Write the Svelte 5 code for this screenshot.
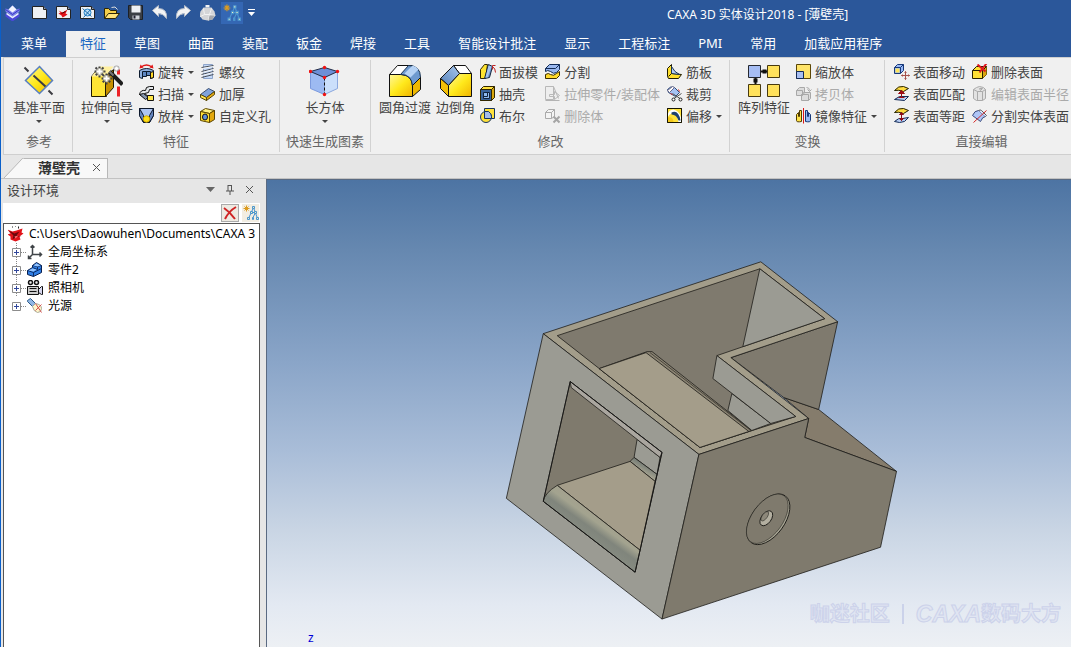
<script>
  const icons = {
    logo: '<path d="M1 4l3 1 4-4 4 4 3-1v3l-7 5-7-5z" fill="#7f84ee"/><path d="M4 5l4-4 4 4-4 3z" fill="#f2f4ff"/><path d="M1 9l3 1 4 3 4-3 3-1v3l-7 5-7-5z" fill="#4a47d8"/><path d="M2 8l6 4 6-4v2l-6 4-6-4z" fill="#e6eaff"/><path d="M1 5l7 5 7-5" stroke="#3431c0" fill="none"/>',
    blank: '<path d="M1 2h11l3 3v9H1z" fill="#eef0f3" stroke="#222"/><path d="M12 2v3h3" fill="#8d9bb5" stroke="#222"/>',
    newPart: '<path d="M1 2h11l3 3v9H1z" fill="#eef0f3" stroke="#222"/><path d="M12 2v3h3" fill="#8d9bb5" stroke="#222"/><path d="M3 6l4 2 5-3-2 4 2 1-3 2-2 1-1-2-3-2 2-1z" fill="#e21018"/><path d="M6 9l4-2" stroke="#500"/>',
    newDraw: '<path d="M1 2h11l3 3v9H1z" fill="#eef0f3" stroke="#222"/><path d="M12 2v3h3" fill="#8d9bb5" stroke="#222"/><circle cx="8" cy="8" r="3.500" fill="#bfe0f5" stroke="#2483c8"/><path d="M3 4l9 8M11 5l-7 8" stroke="#1b69a8"/>',
    folder: '<path d="M1 14V4h4l2 2h6v3" fill="#f3cf4b" stroke="#2b2508"/><path d="M1 14l4-5h11l-4 5z" fill="#ffe479" stroke="#2b2508"/><path d="M8 3q4-2 6 2" stroke="#ddd" fill="none"/>',
    save: '<path d="M1 1h14v14H3l-2-2z" fill="#3b3f46" stroke="#1c2027"/><path d="M4 1h9v7H4z" fill="#eef0f4"/><path d="M5 11h7v4H5z" fill="#cfd3da"/><path d="M6 11h2v3H6z" fill="#223"/>',
    undo: '<path d="M1 6l6-5v3q9 0 8 10-3-5-8-5v3z" fill="#f4f4f4" stroke="#b5bdca"/>',
    redo: '<path d="M15 6L9 1v3q-9 0-8 10 3-5 8-5v3z" fill="#f4f4f4" stroke="#b5bdca"/>',
    sphere: '<path d="M6 0h4v3H6z" fill="#f3f3f3"/><path d="M4 3h8l3 4 1 4-3 4-5 1-5-1-3-4 1-4z" fill="#d4d5d7"/><path d="M4 4l1 6-4 2M12 4l-2 6 5 1M5 10h5l-1 6" stroke="#f2f2f2" fill="none"/><path d="M10 11l5 0-2 4-4 1z" fill="#a7a9ad"/>',
    structure: '<path d="M4 1v6M1 4h6M2 2l4 4M6 2L2 6" stroke="#dc9c20"/><path d="M11 3L6 14M11 3l4 11M9 8h4M13 8l-3 6" stroke="#4a94cf" fill="none"/><path d="M10 2h2v2h-2zM8 7h2v2H8zM12 7h2v2h-2zM5 13h2v2H5zM10 13h1v2h-1zM14 13h2v2h-2z" fill="#f3f3c4" stroke="#4a94cf"/>',
    revolve: '<path d="M1 7q7-4 14 0v7l-3 1v-5q-4-2-8 0v5l-3-1z" fill="#8fb0e0" stroke="#0d1b2e"/><path d="M4 8h4v5H4zM8 8h4v4H8z" fill="#5f87c2" stroke="#0d1b2e"/><path d="M12 9l3-1v6l-3 1z" fill="#ffd927" stroke="#111"/><path d="M2 4q6-5 12 0" stroke="#e01818" fill="none" stroke-width="1.500"/><path d="M1 5l1-4 3 3zM15 5l-1-4-3 3z" fill="#e01818"/>',
    sweep: '<path d="M1 9q1-5 6-4l1-3 3-1h4v3h-4l-1 3-4 1 4 3-2 2z" fill="#e3e7ea" stroke="#111"/><path d="M1 9l6 5 3-2-5-4z" fill="#8596ae" stroke="#111"/><path d="M9 10h6v5H9z" fill="#ffe646" stroke="#111"/>',
    loft: '<path d="M1 1h14v7l-4 7H5L1 8z" fill="#adc5f3" stroke="#0c172b"/><path d="M1 1l4 7v7L1 8zM15 1l-4 7v7l4-7z" fill="#6384bf" stroke="#0c172b"/><circle cx="8" cy="11.500" r="3.200" fill="#ffe019" stroke="#d0a800"/>',
    thread: '<path d="M4 1h9v14H4z" fill="#c3d8f7" stroke="#8fa6cc"/><path d="M2 4l12-2M2 8l12-3M2 11l12-3M2 14l12-3" stroke="#4c5058"/><path d="M3 5l11-2M3 9l11-3M3 12l11-3" stroke="#f4f4f4"/>',
    thicken: '<path d="M1 9l8-6 6 3-8 6z" fill="#7fa2dc" stroke="#3a4d70"/><path d="M1 9v3l6 3v-3z" fill="#ffe450" stroke="#57470b"/><path d="M7 12l8-6v3l-8 6z" fill="#e5ac16" stroke="#57470b"/>',
    hole: '<path d="M1 4l5-3 9 2-5 3z" fill="#fff283" stroke="#5c4600"/><path d="M1 4l9 2v9l-9-2z" fill="#ffdf35" stroke="#5c4600"/><path d="M10 6l5-3v9l-5 3z" fill="#e3a80d" stroke="#5c4600"/><ellipse cx="5.500" cy="9.500" rx="2.500" ry="3" fill="#6293da" stroke="#111"/>',
    draft: '<path d="M1 6l4-5h3L6 15H1z" fill="#ffe431" stroke="#302700"/><path d="M5 15L9 1l4 2-3 11z" fill="#6d96ce" stroke="#14243c"/><path d="M9 2l3 1-4 11H6z" fill="#a8c5ed"/><path d="M16 9q0-4-3-6m0 3V2h3" fill="none" stroke="#b22"/>',
    shell: '<path d="M1 4l3-3h11v11l-3 3H1z" fill="#ffe23e" stroke="#302600"/><path d="M12 4l3-3v11l-3 3z" fill="#d7a50c" stroke="#302600"/><path d="M1 4h11v11H1z" fill="#38639a" stroke="#302600"/><path d="M4 7h6v6H4z" fill="#8dbbf1" stroke="#10233d"/><path d="M4 11h4V7" fill="none" stroke="#10233d"/>',
    bool: '<path d="M5 1h10v10H5z" fill="#ffe13a" stroke="#15335e"/><circle cx="6.500" cy="9.500" r="5.500" fill="#ffe13a" stroke="#15335e"/><path d="M5 4h4q3 2 3 5v2H5z" fill="#a6bde9" stroke="#15335e"/>',
    split: '<path d="M1 5l4-4h10v5l-3 3q-3 2-6-1-3-2-5 0z" fill="#9ab8ef" stroke="#112b56"/><path d="M1 5h10l4-4" fill="none" stroke="#112b56"/><path d="M1 11q3-2 5 0 3 2 6-1l3-2v4l-3 3H1z" fill="#ffda2b" stroke="#3b2d00"/>',
    pull: '<path d="M1 1h8v13H1zM9 1l5 12M5 9h5V6l5 4-5 4v-3H5z" fill="#eee" stroke="#b8b8b8"/><path d="M1 15h14" stroke="#b3b3b3"/>',
    delBody: '<path d="M1 5l3-3h6v7l-3 2H1zM1 5h6v6M7 5l3-3" fill="#f4f4f4" stroke="#aaa"/><path d="M9 9l6 6M15 9l-6 6" stroke="#a5a5a5" stroke-width="2"/>',
    rib: '<path d="M1 5l4-4v9l10 1-3 4H2l-1-2z" fill="#ffdf2c" stroke="#1d1a00"/><path d="M5 3v7l8 1Q8 9 5 3z" fill="#b5cff5" stroke="#1b3350"/><path d="M2 13l3-3" stroke="#1d1a00"/>',
    trim: '<path d="M1 4q3-4 7-2l5 5-4 4-7-4z" fill="#a6c2f3" stroke="#334c78"/><path d="M1 5l5-4 2 1-5 5z" fill="#fff" stroke="#668"/><path d="M6 8l9 6M15 8l-9 6" stroke="#555"/><circle cx="7" cy="14" r="1.500" fill="#fff" stroke="#222"/><circle cx="14" cy="14" r="1.500" fill="#fff" stroke="#222"/><path d="M4 8l2 1M12 4l1 2" stroke="#d22"/>',
    offset: '<path d="M1 1h14v14H1z" fill="#ffe33b" stroke="#171500"/><path d="M1 8Q2 2 7 2q8 2 8 13h-3Q11 7 6 6q-3 0-5 4z" fill="#fff"/><path d="M5 5q7-3 9 8h-2Q10 7 5 7z" fill="#1f416e"/><path d="M1 10q6-1 6 5H1z" fill="#f4c81c"/><path d="M1 1h14v14H1z" fill="none" stroke="#171500"/>',
    scale: '<path d="M1 1h14v14H1z" fill="#ffe469" stroke="#5c4707"/><path d="M1 8h7v7H1z" fill="#a9bff1" stroke="#132a56"/>',
    copy: '<path d="M1 5l3-3h5v5l-2 3H1zM6 9l2-2h7v6l-2 2H6z" fill="#ddd" stroke="#a8a8a8"/><path d="M1 5h6v5M6 9h7v6M11 2q3 0 3 3M12 4l2 2 2-2" fill="none" stroke="#a8a8a8"/>',
    mirror: '<path d="M6 3v11q-5 1-5-1V7l2-2v4h1V3z" fill="#ffe249" stroke="#4f3b00"/><path d="M10 3v11q5 1 5-1V7l-2-2v4h-1V3z" fill="#98baf2" stroke="#17397b"/><path d="M8 0v16" stroke="#dc1717"/>',
    faceMove: '<path d="M1 4l3-3h6v6l-3 3H1z" fill="#98b9f7" stroke="#173879"/><path d="M1 4h6v6M7 4l3-3" fill="none" stroke="#173879"/><path d="M2 5h4v4H2z" fill="#ffe55b"/><path d="M12 8v8M8 12h8M11 9l1-1 1 1M11 15l1 1 1-1M9 11l-1 1 1 1M15 11l1 1-1 1" fill="none" stroke="#a5524c"/>',
    faceMatch: '<path d="M1 5q4-5 9-4l5 2-5 3q-5-2-9-1z" fill="#ffdc40" stroke="#242000"/><path d="M1 14l5-3h9l-4 4z" fill="#b7cdf4" stroke="#142b56"/><path d="M8 5v7M5 8l3-3 3 3z" fill="#9c0d16" stroke="#9c0d16"/><path d="M5 12h6" stroke="#9c0d16"/>',
    faceOffset: '<path d="M1 5q4-5 9-4l5 2-5 3q-5-2-9-1z" fill="#ffdc40" stroke="#242000"/><path d="M1 14q4-4 8-3l6-1-4 4q-5 2-10 0z" fill="#b7cdf4" stroke="#142b56"/><path d="M8 5v8M6 7l2-2 2 2zM6 11l2 2 2-2z" fill="#8c0d16" stroke="#8c0d16"/>',
    delFace: '<path d="M1 7l4-4h10v8l-4 4H1z" fill="#ffe035" stroke="#282100"/><path d="M11 7l4-4v8l-4 4z" fill="#d9a510"/><path d="M1 7h10v8M11 7l4-4" fill="none" stroke="#282100"/><path d="M6 1l8 7M15 0L8 9" stroke="#df1820" stroke-width="2"/>',
    editRadius: '<path d="M2 4l3-2 3-1 4 1 2 2v9l-3 2H5l-3-2z" fill="#e2e2e2" stroke="#aaa"/><path d="M2 4l4 2h5l3-2M6 6v9M11 6v9M8 3h3l-2 2z" fill="none" stroke="#aaa"/>',
    splitFace: '<path d="M1 8q2-5 6-5l7 6q-3 0-5 5z" fill="#afc6f7" stroke="#3a4b7d"/><path d="M7 3q2-1 3 0l5 5-1 1" fill="#dee8ff" stroke="#555"/><path d="M2 15L15 3" stroke="#d62626"/>',
    datum: '<path d="M17 2l13 14-13 13L3 16z" fill="url(#gold)" stroke="#587fc0" stroke-width="1.500"/><path d="M2 3l4 4M11 11l12 11M26 26l4 4" stroke="#3c3c42" stroke-width="2"/>',
    wizard: '<path d="M1 12l4-5h10v24l1 1H1z" fill="#ffe535" stroke="#201900"/><path d="M15 12l8-7v18l-8 9z" fill="#c79000" stroke="#201900"/><path d="M1 12l8-10h14l-8 10z" fill="#fff0a0"/><path d="M28 5v27" stroke="#ec2227" stroke-width="3" stroke-dasharray="5 12 10"/><g fill="#999" opacity=".8"><circle cx="9" cy="7" r="4"/><circle cx="16" cy="14" r="4"/><circle cx="26" cy="4" r="3"/></g><g stroke="#444" stroke-width="2" stroke-dasharray="2 7"><path d="M9 2v11M4 7h11M5 3l8 8M13 3l-8 8M16 9v11M11 14h11M12 10l8 8M20 10l-8 8"/></g><path d="M9 4v6M6 7h6M16 11v6M13 14h6M26 2v4M24 4h4" stroke="#fff" stroke-width="2"/><path d="M19 7l13 13" stroke="#1d1d1d" stroke-width="4"/><path d="M19 7l4 4" stroke="#777" stroke-width="2"/>',
    box: '<path d="M2 7l14-4 13 4-13 6z" fill="#6c8fd8"/><path d="M2 7l14 6v17L2 24z" fill="#9dbaf2" stroke="#7c9ade"/><path d="M16 13l13-6v17l-13 6z" fill="#cbdffb" stroke="#8ca8de"/><path d="M16 13v17" stroke="#111" stroke-dasharray="3 2"/><path d="M2 7l14-4 13 4-13 6z" fill="none" stroke="#222b45"/><g fill="#f01212"><circle cx="2" cy="7" r="1.700"/><circle cx="16" cy="3" r="1.700"/><circle cx="29" cy="7" r="1.700"/><circle cx="16" cy="13" r="1.700"/><circle cx="16" cy="30" r="1.700"/></g>',
    fillet: '<path d="M1 10L9 1h15l-8 9z" fill="#fff" stroke="#111"/><path d="M1 10h12q11 1 11 12v10H1z" fill="url(#gold)" stroke="#111"/><path d="M12 10l8-9q12 0 12 12l-8 8Q23 10 12 10z" fill="#6f9acf" stroke="#19324f"/><path d="M16 9l8-8q4 1 6 4l-8 8z" fill="#b6d2f4"/><path d="M24 21l8-8v12l-8 7z" fill="#eeb800" stroke="#111"/>',
    chamfer: '<path d="M14 1h12l6 8H20z" fill="#fff" stroke="#111"/><path d="M1 14L14 1l6 8L9 21z" fill="url(#steel)" stroke="#111"/><path d="M1 14l8 7v11l-8-8z" fill="#f3c008" stroke="#111"/><path d="M9 21L20 9h12v23H9z" fill="url(#gold)" stroke="#111"/>',
    pattern: '<path d="M13 7h7M8 13v7" stroke="#101010" stroke-width="2"/><path d="M15 5h4v4h-4zM6 14h4v4H6z" fill="#101010"/><path d="M1 1h12v12H1z" fill="#a6bdf3" stroke="#25282f"/><path d="M20 1h12v12H20zM1 20h12v12H1zM20 20h12v12H20z" fill="#ffe15b" stroke="#47390f"/>',
    scene: '<path d="M0 4l5 2 4-1 6-2-1 4 2 1-4 3 1 3-5 2-5-2 0-3-3-2 3-1z" fill="#e11219"/><path d="M1 5l6 3 5-2-3 4 5 1-5 0-4 3 1-4z" fill="#69080c"/><path d="M5 1v1M11 1v2M8 0v1" stroke="#222"/><path d="M7 11l4-1-3 3z" fill="#ff7072"/>',
    axes: '<path d="M6 11V2M6 11h9M6 11l-4 4M4 4l2-2 2 2M13 9l2 2-2 2M2 12v3h3" fill="none" stroke="#404448" stroke-width="1.500"/>',
    part: '<path d="M1 9l5-3V4l4-3 5 3v7l-8 4-6-2z" fill="#2f7fe6" stroke="#091e4c"/><path d="M1 9l6 2v4M7 11l8-4M6 6l5 2V5l4-1M6 4l5 1" fill="none" stroke="#092b66"/><path d="M2 9l4-2 4 1-3 2zM7 4l3-2 4 2-3 1z" fill="#94c5ff"/>',
    camera: '<circle cx="4" cy="3" r="2" fill="#eee" stroke="#111" stroke-width="1.500"/><circle cx="10" cy="3" r="2" fill="#eee" stroke="#111" stroke-width="1.500"/><path d="M1 7h11v8H1z" fill="#ccc" stroke="#111"/><path d="M12 10l3-3h1v8h-1l-3-2z" fill="#d7d7ef" stroke="#111"/><path d="M3 9h7M3 12h7" stroke="#111"/>',
    light: '<path d="M1 3l3-2 5 5-3 3-5-5z" fill="#8fb6e4" stroke="#2f5a86"/><path d="M6 9l3-3q6 1 6 5 0 4-4 4-4-1-5-6z" fill="#fff5c8" stroke="#aa9"/><path d="M9 6l6 9M9 13l6-6" stroke="#d55252"/>'
  };

  const quick = [
    ['logo', 'CAXA'], ['blank', '新建'], ['newPart', '新建设计'], ['newDraw', '新建图纸'], ['folder', '打开'],
    ['save', '保存'], ['undo', '撤销'], ['redo', '重做'], ['sphere', '渲染']
  ];
  const tabs = ['特征', '草图', '曲面', '装配', '钣金', '焊接', '工具', '智能设计批注', '显示', '工程标注', 'PMI', '常用', '加载应用程序'];

  // Small commands: [icon, label, has drop-down, disabled]
  const groups = [
    { name: '参考', large: [['datum', '基准平面', true]], cols: [] },
    {
      name: '特征', large: [['wizard', '拉伸向导', true]],
      cols: [
        [['revolve', '旋转', true], ['sweep', '扫描', true], ['loft', '放样', true]],
        [['thread', '螺纹'], ['thicken', '加厚'], ['hole', '自定义孔']]
      ]
    },
    { name: '快速生成图素', large: [['box', '长方体', true]], cols: [] },
    {
      name: '修改', large: [['fillet', '圆角过渡'], ['chamfer', '边倒角']],
      cols: [
        [['draft', '面拔模'], ['shell', '抽壳'], ['bool', '布尔']],
        [['split', '分割'], ['pull', '拉伸零件/装配体', false, true], ['delBody', '删除体', false, true]],
        [['rib', '筋板'], ['trim', '裁剪'], ['offset', '偏移', true]]
      ]
    },
    {
      name: '变换', large: [['pattern', '阵列特征']],
      cols: [[['scale', '缩放体'], ['copy', '拷贝体', false, true], ['mirror', '镜像特征', true]]]
    },
    {
      name: '直接编辑', large: [],
      cols: [
        [['faceMove', '表面移动'], ['faceMatch', '表面匹配'], ['faceOffset', '表面等距']],
        [['delFace', '删除表面'], ['editRadius', '编辑表面半径', false, true], ['splitFace', '分割实体表面']]
      ]
    }
  ];
  const nodes = [['axes', '全局坐标系'], ['part', '零件2'], ['camera', '照相机'], ['light', '光源']];

  let active = $state('特征');
  let filter = $state('');
</script>

{#snippet icon(name, size = 16)}
  <svg class="icon" width={size} height={size} viewBox="0.5 0.5 {size} {size}" aria-hidden="true">{@html icons[name]}</svg>
{/snippet}

{#snippet arrow()}
  <svg class="arrow" width="6" height="3" viewBox="0 0 6 3" aria-hidden="true"><path d="M0 0h6L3 3z" fill="#444" /></svg>
{/snippet}

<div class="app">
  <svg width="0" height="0" aria-hidden="true">
    <linearGradient id="gold" x1="0" y1="0" x2="1" y2="1">
      <stop offset="0" stop-color="#fff79a" /><stop offset=".5" stop-color="#ffe91c" /><stop offset="1" stop-color="#f0b400" />
    </linearGradient>
    <linearGradient id="steel" x1="0" y1="1" x2="1" y2="0">
      <stop offset="0" stop-color="#5580b8" /><stop offset="1" stop-color="#a9c8ee" />
    </linearGradient>
  </svg>
  <header>
    <div class="titlebar">
      <div class="quick">
        {#each quick as [name, label]}
          <button aria-label={label}>{@render icon(name)}</button>
        {/each}
        <button class="lit" aria-label="设计树">{@render icon('structure')}</button>
        <button class="more" aria-label="自定义">
          <svg width="7" height="7" viewBox="0 0 7 7"><path d="M0 0h7v1H0zM0 3h7L3.500 7z" fill="#fff" /></svg>
        </button>
      </div>
      <h1>CAXA 3D 实体设计2018 - [薄壁壳]</h1>
    </div>
    <nav>
      <button class="menu">菜单</button>
      {#each tabs as tab}
        <button class:active={active === tab} onclick={() => (active = tab)}>{tab}</button>
      {/each}
    </nav>
  </header>

  <div class="ribbon">
    {#each groups as group}
      <section class="group">
        <div class="commands">
          {#each group.large as [name, label, drop]}
            <button class="large">
              {@render icon(name, 32)}
              <span>{label}</span>
              {#if drop}{@render arrow()}{/if}
            </button>
          {/each}
          {#each group.cols as col}
            <div class="col">
              {#each col as [name, label, drop, off]}
                <button class="small" disabled={off}>
                  {@render icon(name)}
                  <span>{label}</span>
                  {#if drop}{@render arrow()}{/if}
                </button>
              {/each}
            </div>
          {/each}
        </div>
        <h2>{group.name}</h2>
      </section>
    {/each}
  </div>

  <div class="docs">
    <svg class="slant" width="20" height="20" viewBox="0 0 20 20" aria-hidden="true">
      <path d="M0 20L17 2l3-2v20z" fill="#f8f8f8" /><path d="M0 20L17 2q1-2 3-2" fill="none" stroke="#b8b8b8" />
    </svg>
    <div class="doc">
      <span>薄壁壳</span>
      <button aria-label="关闭文档"><svg width="9" height="9" viewBox="0 0 9 9"><path d="M1 1l7 7M8 1L1 8" stroke="#555" /></svg></button>
    </div>
  </div>

  <main>
    <aside>
      <div class="panel-head">
        <h2>设计环境</h2>
        <button aria-label="选项"><svg width="9" height="5" viewBox="0 0 9 5"><path d="M0 0h9L4.500 5z" fill="#666" /></svg></button>
        <button aria-label="固定"><svg width="8" height="10" viewBox="0 0 8 10"><path d="M2 0v6M5.500 0v6M2 .5h4M0 6h8M4 6v4" stroke="#555" fill="none" /></svg></button>
        <button aria-label="关闭"><svg width="9" height="9" viewBox="0 0 9 9"><path d="M1 1l7 7M8 1L1 8" stroke="#555" /></svg></button>
      </div>
      <div class="search">
        <input type="text" aria-label="搜索设计树" bind:value={filter} />
        <button class="clear" aria-label="清除" onclick={() => (filter = '')}>
          <svg width="14" height="14" viewBox="0 0 14 14"><path d="M1 2q6 4 11 11M13 1Q6 5 2 13" fill="none" stroke="#cf2525" stroke-width="2" /></svg>
        </button>
        <button class="pick" aria-label="设计树">{@render icon('structure')}</button>
      </div>
      <div class="tree">
        <div class="root">{@render icon('scene')}<span>C:\Users\Daowuhen\Documents\CAXA 3</span></div>
        <ul>
          {#each nodes as [name, label]}
            <li>
              <button class="expand" aria-label="展开"><svg width="9" height="9" viewBox="0 0 9 9"><path d="M.5.5h8v8h-8z" fill="#fff" stroke="#8c8c8c" /><path d="M2 4.500h5M4.500 2v5" stroke="#31479b" /></svg></button>
              <i></i>
              {@render icon(name)}
              <span>{label}</span>
            </li>
          {/each}
        </ul>
      </div>
    </aside>

    <div class="view">
      <svg class="model" viewBox="267 179 804 468" role="img" aria-label="薄壁壳">
        <defs>
          <linearGradient id="fillet" gradientUnits="userSpaceOnUse" x1="600" y1="518" x2="587" y2="536">
            <stop offset="0" stop-color="#a4a28f" /><stop offset=".25" stop-color="#a3a38f" />
            <stop offset=".6" stop-color="#80857c" /><stop offset="1" stop-color="#858a80" />
          </linearGradient>
          <linearGradient id="back" gradientUnits="userSpaceOnUse" x1="646" y1="465" x2="642" y2="472">
            <stop offset="0" stop-color="#777d76" /><stop offset="1" stop-color="#a5a390" />
          </linearGradient>
        </defs>
        <g stroke="#1e1d19" stroke-width=".8" stroke-linejoin="round">
          <path d="M784 397L819 409 897 471 805 437 809 418z" fill="#857c6c" />
          <path d="M731 357L838 321 819 409 784 397z" fill="#7f7a6e" />
          <path d="M543 333L761 261 838 321 731 357 809 418 699 454z" fill="#a39d8a" />
          <path d="M557 335L760 268 825 318 717 355 796 416 700 447z" fill="#7f7a6e" />
          <path d="M760 268L825 318 743 346z" fill="#9b9b93" />
          <path d="M599 368L647 351 652 351 752 430 700 447z" fill="#8b8473" />
          <path d="M599 368L646 352 749 431 700 447z" fill="#a49d8a" />
          <path d="M650 352L751 430" fill="none" stroke-width=".6" />
          <path d="M732 393L728 410 752 430 771 423z" fill="#9b9b93" />
          <path d="M717 355L796 416 771 423 713 378z" fill="#9b9b93" />
          <path d="M543 333L699 454 662 619 506 498z" fill="#9b9b93" />
          <path d="M699 454L809 418 805 437 897 471 881 547 662 619z" fill="#7f7a6d" />
          <path d="M570 381L662 452 635 572 543 501z" fill="#7f7a6d" />
          <path d="M637 439L660 457 657 474 634 457z" fill="#9b9b93" />
          <path d="M634 457L657 474 655 481 630 461z" fill="url(#back)" />
          <path d="M630 461L655 481 640 550 557 485z" fill="#a49d8a" />
          <path d="M557 485L640 550 635 572 543 501Q544 493 557 485z" fill="url(#fillet)" />
          <path d="M570 381L662 452 660 457 571 387z" fill="#aaa69f" />
          <path d="M570 381L662 452 635 572 543 501z" fill="none" stroke="#111" />
        </g>
        <g fill="#7f7a6d" stroke="#1e1d19" stroke-width=".9">
          <ellipse cx="768.500" cy="519" rx="16.500" ry="29" transform="rotate(36 768.500 519)" fill="#a7a493" />
          <ellipse cx="767.500" cy="518.500" rx="15.500" ry="28.500" transform="rotate(36 767.500 518.500)" stroke-width=".5" />
          <ellipse cx="766.500" cy="518" rx="5" ry="8.500" transform="rotate(36 766.500 518)" fill="#b3afa0" />
          <ellipse cx="765" cy="516" rx="2.500" ry="5.500" transform="rotate(36 765 516)" fill="#8d887a" stroke-width=".5" />
        </g>
      </svg>
      <span class="axis">z</span>
      <p class="mark">咖迷社区 <b></b> <em>CAXA</em>数码大方</p>
    </div>
  </main>
</div>

<style>
  :global(body) { margin: 0; }
  .app {
    display: flex; flex-direction: column; box-sizing: border-box; height: 100vh; overflow: hidden;
    border-left: 1px solid #0a5fc9; background: #e6e6e6; color: #444;
    font: 13px/20px "Noto Sans", "Noto Sans CJK SC", sans-serif;
  }
  button { display: flex; align-items: center; margin: 0; padding: 0; border: 0; background: none; color: inherit; font: inherit; white-space: nowrap; }
  h1, h2, p, ul { margin: 0; padding: 0; font: inherit; list-style: none; }
  svg { display: block; flex: none; }

  header { flex: none; background: #2b579a; color: #fff; }
  .titlebar { display: flex; align-items: center; height: 31px; }
  .quick { display: flex; align-items: center; gap: 8px; height: 24px; padding-left: 4px; margin-bottom: 6px; }
  .quick button:first-child { margin-right: 3px; }
  .quick .lit { justify-content: center; width: 22px; height: 22px; margin-left: -3px; background: #3467b4; }
  .quick .lit .icon { width: 18px; height: 18px; }
  .quick .more { margin-left: -3px; }
  h1 { margin: 0 0 2px 412px; font-size: 12px; white-space: nowrap; }
  nav { display: flex; height: 26px; padding-left: 6px; }
  nav button { flex: none; padding: 0 14px 2px; }
  nav .menu { margin-right: 5px; }
  nav .active { background: #f0f0f0; color: #1b66c2; }

  .ribbon {
    display: flex; flex: none; height: 96px; margin-left: 2px; overflow: hidden;
    border: solid #cfcfcf; border-width: 1px 0 1px 1px; background: #f0f0f0;
  }
  .group { display: flex; flex: none; flex-direction: column; box-sizing: border-box; padding: 3px 8px 0; border-right: 1px solid #d2d2d2; border-image: linear-gradient(transparent 3px, #d2d2d2 3px calc(100% - 3px), transparent 0) 1; }
  .group:first-child { padding: 3px 7px 0 9px; }
  .group:nth-child(3) { padding: 3px 6px 0; }
  .group:nth-child(4), .group:nth-child(5) { padding-right: 7px; }
  .group:last-child { padding-left: 9px; }
  .commands { display: flex; justify-content: center; gap: 6px; height: 70px; }
  .group:nth-child(4) .commands { gap: 5px; }
  .group:nth-child(4) .col:nth-child(n + 4) { margin-left: 2px; }
  .group:last-child .commands { gap: 7px; }
  .large { flex-direction: column; padding-top: 4px; }
  .large .arrow { margin-top: 3px; }
  .col { display: flex; flex-direction: column; }
  .small { gap: 3px; height: 22px; }
  .small .arrow { margin-left: 1px; }
  .small:disabled { color: #aaa; }
  .group h2 { color: #666; text-align: center; white-space: nowrap; }

  .docs { display: flex; flex: none; align-items: flex-end; box-sizing: border-box; height: 24px; padding-left: 3px; border-bottom: 1px solid #c2c2c2; }
  .doc { display: flex; align-items: center; gap: 12px; box-sizing: border-box; height: 20px; padding: 0 6px 2px 14px; border: solid #b8b8b8; border-width: 1px 1px 0 0; background: #f8f8f8; color: #333; font-size: 14px; font-weight: 600; }

  main { display: flex; flex: 1; min-height: 0; }
  aside { display: flex; flex: none; flex-direction: column; width: 257px; padding: 0 6px 0 2px; }
  .panel-head { display: flex; align-items: center; gap: 11px; box-sizing: border-box; height: 24px; padding: 0 6px 3px 4px; flex: none; }
  .panel-head h2 { flex: 1; }
  .search { display: flex; flex: none; align-items: center; gap: 3px; height: 20px; padding-right: 1px; background: #fff; }
  .search input { flex: 1; min-width: 0; height: 18px; box-sizing: border-box; padding: 0 4px; border: 0; outline: 0; font: inherit; }
  .clear { justify-content: center; box-sizing: border-box; width: 18px; height: 18px; border: 1px solid #aaa; background: #eeeae2; }
  .pick { justify-content: center; width: 17px; height: 18px; background: #f2ede2; }
  .tree { flex: 1; box-sizing: border-box; min-height: 0; overflow: hidden; padding: 1px 0 0 4px; border: solid #555; border-width: 1px 1px 0; background: #fff; color: #000; font-size: 12px; line-height: 18px; }
  .root, li { display: flex; align-items: center; height: 18px; white-space: nowrap; }
  .root { gap: 5px; }
  li { padding-left: 4px; background: linear-gradient(#888 1px, transparent 1px) 8px 0 / 1px 2px repeat-y; }
  li:last-child { background: none; }
  li i { width: 6px; height: 1px; background: repeating-linear-gradient(90deg, #888 0 1px, transparent 1px 2px); }
  li span { margin-left: 5px; }

  .view { position: relative; flex: 1; min-width: 0; border: solid #5a6a82; border-width: 1px 0 0 1px; background: linear-gradient(#4d74a3, #6688b0 15%, #8aa5c8 39%, #a9bdd8 58%, #c9d5e4 75%, #e3e9f2 91%, #edf0f4); }
  .model { width: 100%; height: 100%; }
  .axis { position: absolute; bottom: 0; left: 41px; color: #0000d8; font-size: 12px; line-height: 18px; }
  .mark { position: absolute; right: 10px; bottom: 20px; display: flex; align-items: center; color: #e0e5f2; font-size: 20px; font-weight: 700; line-height: 26px; -webkit-text-stroke: 1px #ccd2ea; }
  .mark b { width: 2px; height: 20px; margin: 0 12px; background: #cbd2ea; }
  .mark em { font-family: "Liberation Sans", sans-serif; font-size: 23px; }
</style>
